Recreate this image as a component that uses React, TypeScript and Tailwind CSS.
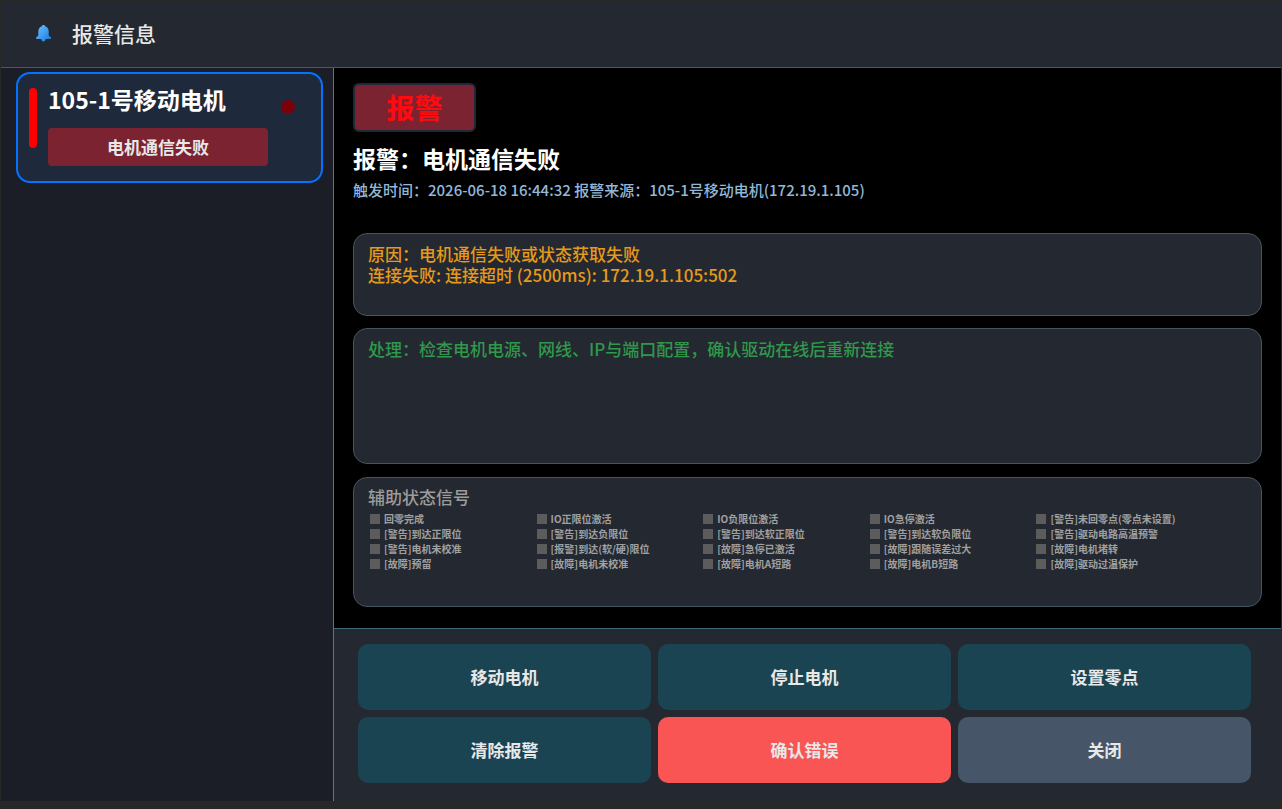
import React, { useState } from 'react';
import clsx from 'clsx';

interface Alarm {
  id: string;
  device: string;
  address: string;
  level: string;
  title: string;
  time: string;
  reason: string;
  solution: string;
}

const alarms: Alarm[] = [
  {
    id: '105-1',
    device: '105-1号移动电机',
    address: '172.19.1.105',
    level: '报警',
    title: '电机通信失败',
    time: '2026-06-18 16:44:32',
    reason: '原因：电机通信失败或状态获取失败\n连接失败: 连接超时 (2500ms): 172.19.1.105:502',
    solution: '处理：检查电机电源、网线、IP与端口配置，确认驱动在线后重新连接',
  },
];

const signals = [
  '回零完成', 'IO正限位激活', 'IO负限位激活', 'IO急停激活', '[警告]未回零点(零点未设置)',
  '[警告]到达正限位', '[警告]到达负限位', '[警告]到达软正限位', '[警告]到达软负限位', '[警告]驱动电路高温预警',
  '[警告]电机未校准', '[报警]到达(软/硬)限位', '[故障]急停已激活', '[故障]跟随误差过大', '[故障]电机堵转',
  '[故障]预留', '[故障]电机未校准', '[故障]电机A短路', '[故障]电机B短路', '[故障]驱动过温保护',
];

const actions = [
  { label: '移动电机', color: 'bg-[#1b4453] hover:bg-[#215264]' },
  { label: '停止电机', color: 'bg-[#1b4453] hover:bg-[#215264]' },
  { label: '设置零点', color: 'bg-[#1b4453] hover:bg-[#215264]' },
  { label: '清除报警', color: 'bg-[#1b4453] hover:bg-[#215264]' },
  { label: '确认错误', color: 'bg-[#fa5555] hover:bg-[#fb6b6b]' },
  { label: '关闭', color: 'bg-[#475569] hover:bg-[#526279]' },
];

function BellIcon() {
  return (
    <svg viewBox="0 0 16 18" className="w-4 h-[18px]" aria-hidden="true">
      <defs>
        <linearGradient id="bell" x1="0" y1="0" x2="1" y2="1">
          <stop offset="0" stopColor="#6cbcf8" />
          <stop offset="0.5" stopColor="#42a0f0" />
          <stop offset="1" stopColor="#1b70d0" />
        </linearGradient>
      </defs>
      <path
        d="M7.500 1c-.9 0-1.500.4-1.700 1.200C3.500 3 2.300 4.900 2.300 7.300V11.500L.2 13.500V15H5.200c.3 1.500 1.100 2.500 2.300 2.500s2-1 2.300-2.500H15V13.500L12.700 11.500V7.300c0-2.400-1.200-4.300-3.500-5.100C9 1.400 8.400 1 7.500 1z"
        fill="url(#bell)"
      />
    </svg>
  );
}

function Panel({ className, children }: { className?: string; children: React.ReactNode }) {
  return (
    <section className={clsx('bg-[#242830] border border-[#465561] rounded-[14px] px-[14px]', className)}>
      {children}
    </section>
  );
}

export default function App() {
  const [selectedId, setSelectedId] = useState(alarms[0].id);
  const current = alarms.find((a) => a.id === selectedId) ?? alarms[0];

  return (
    <div className="min-h-screen flex flex-col bg-black border border-b-8 border-[#282828] font-['Noto_Sans_CJK_SC',sans-serif] font-medium">
      <header className="h-[67px] shrink-0 flex items-center gap-5 pb-[2px] px-[35px] bg-[#242830] border-b border-[#3d5f6c]">
        <BellIcon />
        <h1 className="text-[21px] leading-7 text-[#e8e8e8]">报警信息</h1>
      </header>

      <div className="flex-1 flex">
        {/* Alarm list */}
        <aside className="w-[333px] shrink-0 bg-[#1b1e26] border-r border-[#4d7c92] pt-1 pl-[15px] pr-[10px]">
          {alarms.map((alarm) => (
            <button
              key={alarm.id}
              type="button"
              onClick={() => setSelectedId(alarm.id)}
              className={clsx(
                'w-full h-[111px] flex items-start text-left rounded-[14px] border-2 bg-[#1e293b] pt-[14px] pl-[11px] pr-[26px]',
                alarm.id === selectedId ? 'border-[#0573ff]' : 'border-transparent'
              )}
            >
              <span className="w-2 h-[60px] rounded bg-[#ff0000]" />
              <span className="ml-[11px] w-[220px] flex flex-col gap-[18px]">
                <span className="text-[23px] leading-[22px] font-bold text-white">{alarm.device}</span>
                <span className="h-[38px] flex items-center justify-center rounded bg-[#7b2331] text-[17px] font-bold text-[#e8e8e8]">
                  {alarm.title}
                </span>
              </span>
              <span className="ml-auto mt-3 w-[14px] h-[14px] rounded-full bg-[#7b0009]" />
            </button>
          ))}
        </aside>

        <div className="flex-1 min-w-0 flex flex-col">
          <main className="flex-1 flex flex-col pt-[15px] px-[19px] pb-[21px]">
            <div className="self-start w-[123px] h-[49px] pb-[2px] flex items-center justify-center rounded-md border-2 border-[#1e293b] bg-[#7b2331] text-[28px] font-bold text-[#ff0a0f]">
              {current.level}
            </div>
            <h2 className="mt-[13px] text-[23px] leading-[27px] font-bold text-white">
              {current.level}：{current.title}
            </h2>
            <p className="mt-2 text-[15px] leading-5 text-[#92b8d9]">
              触发时间：{current.time} 报警来源：{current.device}({current.address})
            </p>

            <Panel className="mt-[33px] min-h-[83px] pt-[9px] text-[17px] leading-[21px] text-[#e59a1a]">
              <p className="whitespace-pre-line">{current.reason}</p>
            </Panel>

            <Panel className="mt-3 flex-1 min-h-[100px] pt-[9px] text-[17px] leading-[21px] text-[#2f984c]">
              <p>{current.solution}</p>
            </Panel>

            <Panel className="mt-[13px] min-h-[130px] pt-2">
              <h3 className="text-[17px] leading-[21px] text-[#9c9c9c]">辅助状态信号</h3>
              <ul className="mt-1 pl-[2px] pr-11 grid grid-cols-5 text-[10px] leading-[15px] font-bold text-[#a0a0a0]">
                {signals.map((signal) => (
                  <li key={signal} className="flex items-center gap-1 whitespace-nowrap">
                    <span className="w-[10px] h-[10px] bg-[#5c5c5c]" />
                    {signal}
                  </li>
                ))}
              </ul>
            </Panel>
          </main>

          <footer className="grid grid-cols-3 gap-[7px] pt-[15px] pb-[18px] pl-6 pr-[30px] bg-[#242830] border-t border-[#3d6a78]">
            {actions.map((action) => (
              <button
                key={action.label}
                type="button"
                className={clsx('h-[66px] rounded-[10px] text-[17px] font-bold text-[#e8e8e8]', action.color)}
              >
                {action.label}
              </button>
            ))}
          </footer>
        </div>
      </div>
    </div>
  );
}
